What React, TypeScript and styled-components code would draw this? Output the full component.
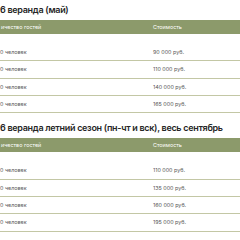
import React from 'react';
import styled, { createGlobalStyle } from 'styled-components';

const GlobalStyle = createGlobalStyle`
  html, body {
    margin: 0;
    padding: 0;
    background: #ffffff;
    overflow: hidden;
  }
`;

interface PriceRow {
  guests: string;
  price: string;
}

interface SectionProps {
  title: string;
  rows: PriceRow[];
}

const Page = styled.div`
  width: 240px;
  font-family: Inter, 'Noto Sans', sans-serif;
`;

const Section = styled.section`
  margin-bottom: 5px;
`;

const Title = styled.h2`
  margin: 0;
  height: 20px;
  line-height: 20px;
  font-size: 9px;
  font-weight: 600;
  letter-spacing: -0.3px;
  color: #262626;
  white-space: nowrap;
`;

const Row = styled.div`
  display: grid;
  grid-template-columns: 153px 1fr;
  align-items: center;
  box-sizing: border-box;
  height: 17.33px;
  font-size: 5.4px;
  color: #555555;
  border-bottom: 1px solid #c3c7a5;
`;

const HeadRow = styled(Row)`
  height: 14px;
  background: #8c9a6b;
  color: #ffffff;
  border-bottom: none;
  margin-bottom: 10px;
`;

const Cell = styled.div<{ $indent?: number }>`
  padding-left: ${({ $indent = 0 }) => $indent}px;
  white-space: nowrap;
`;

const PriceTable: React.FC<SectionProps> = ({ title, rows }) => (
  <Section>
    <Title>{title}</Title>
    <HeadRow>
      <Cell $indent={1}>ичество гостей</Cell>
      <Cell>Стоимость</Cell>
    </HeadRow>
    {rows.map((r) => (
      <Row key={r.price}>
        <Cell>{r.guests}</Cell>
        <Cell>{r.price}</Cell>
      </Row>
    ))}
  </Section>
);

const may: PriceRow[] = [
  { guests: '0 человек', price: '90 000 руб.' },
  { guests: '0 человек', price: '110 000 руб.' },
  { guests: '0 человек', price: '140 000 руб.' },
  { guests: '0 человек', price: '165 000 руб.' },
];

const summer: PriceRow[] = [
  { guests: '0 человек', price: '110 000 руб.' },
  { guests: '0 человек', price: '135 000 руб.' },
  { guests: '0 человек', price: '160 000 руб.' },
  { guests: '0 человек', price: '195 000 руб.' },
];

const App: React.FC = () => (
  <Page>
    <GlobalStyle />
    <PriceTable title="6 веранда (май)" rows={may} />
    <PriceTable title="6 веранда летний сезон (пн-чт и вск), весь сентябрь" rows={summer} />
  </Page>
);

export default App;
